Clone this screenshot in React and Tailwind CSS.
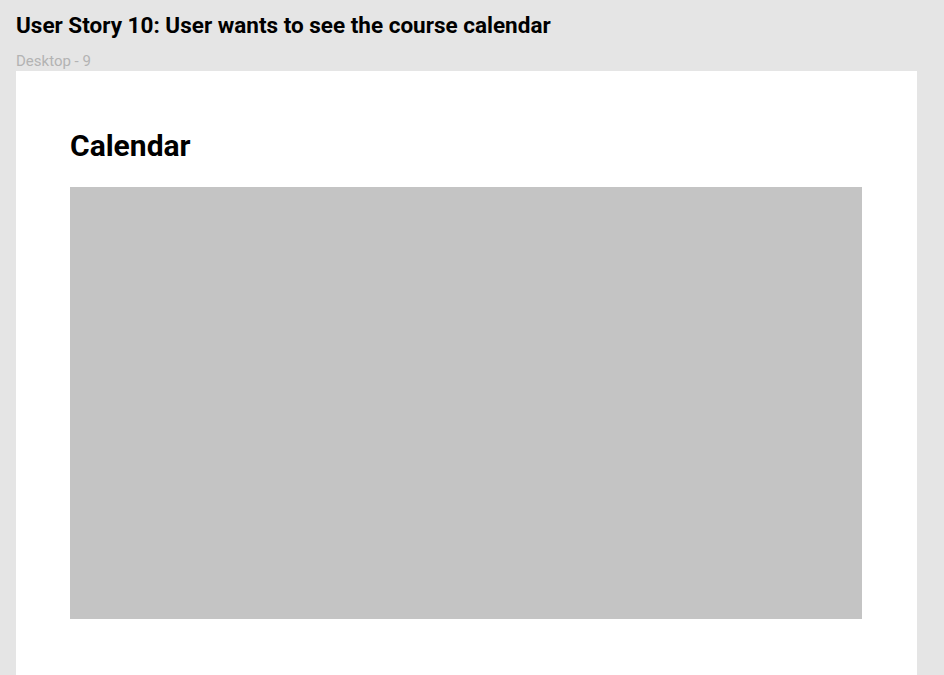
export default function App() {
  return (
    <div className="h-[675px] w-[944px] overflow-hidden bg-[#e5e5e5] font-['Roboto',sans-serif]">
      {/* Story heading */}
      <div className="pl-4 pt-[12px]">
        <h1 className="text-[22.5px] leading-[26px] font-bold text-black">User Story 10: User wants to see the course calendar</h1>
        <div className="mt-[14px] text-[15px] leading-[18px] text-[#b3b3b3]">Desktop - 9</div>
      </div>

      {/* Frame */}
      <div className="ml-4 mt-[1px] h-[604px] w-[901px] bg-white px-[54px] pt-[57px]">
        <h2 className="text-[30px] leading-[36px] font-bold text-black">Calendar</h2>
        <div className="mt-[23px] h-[432px] w-[792px] bg-[#c4c4c4]" />
      </div>
    </div>
  )
}
